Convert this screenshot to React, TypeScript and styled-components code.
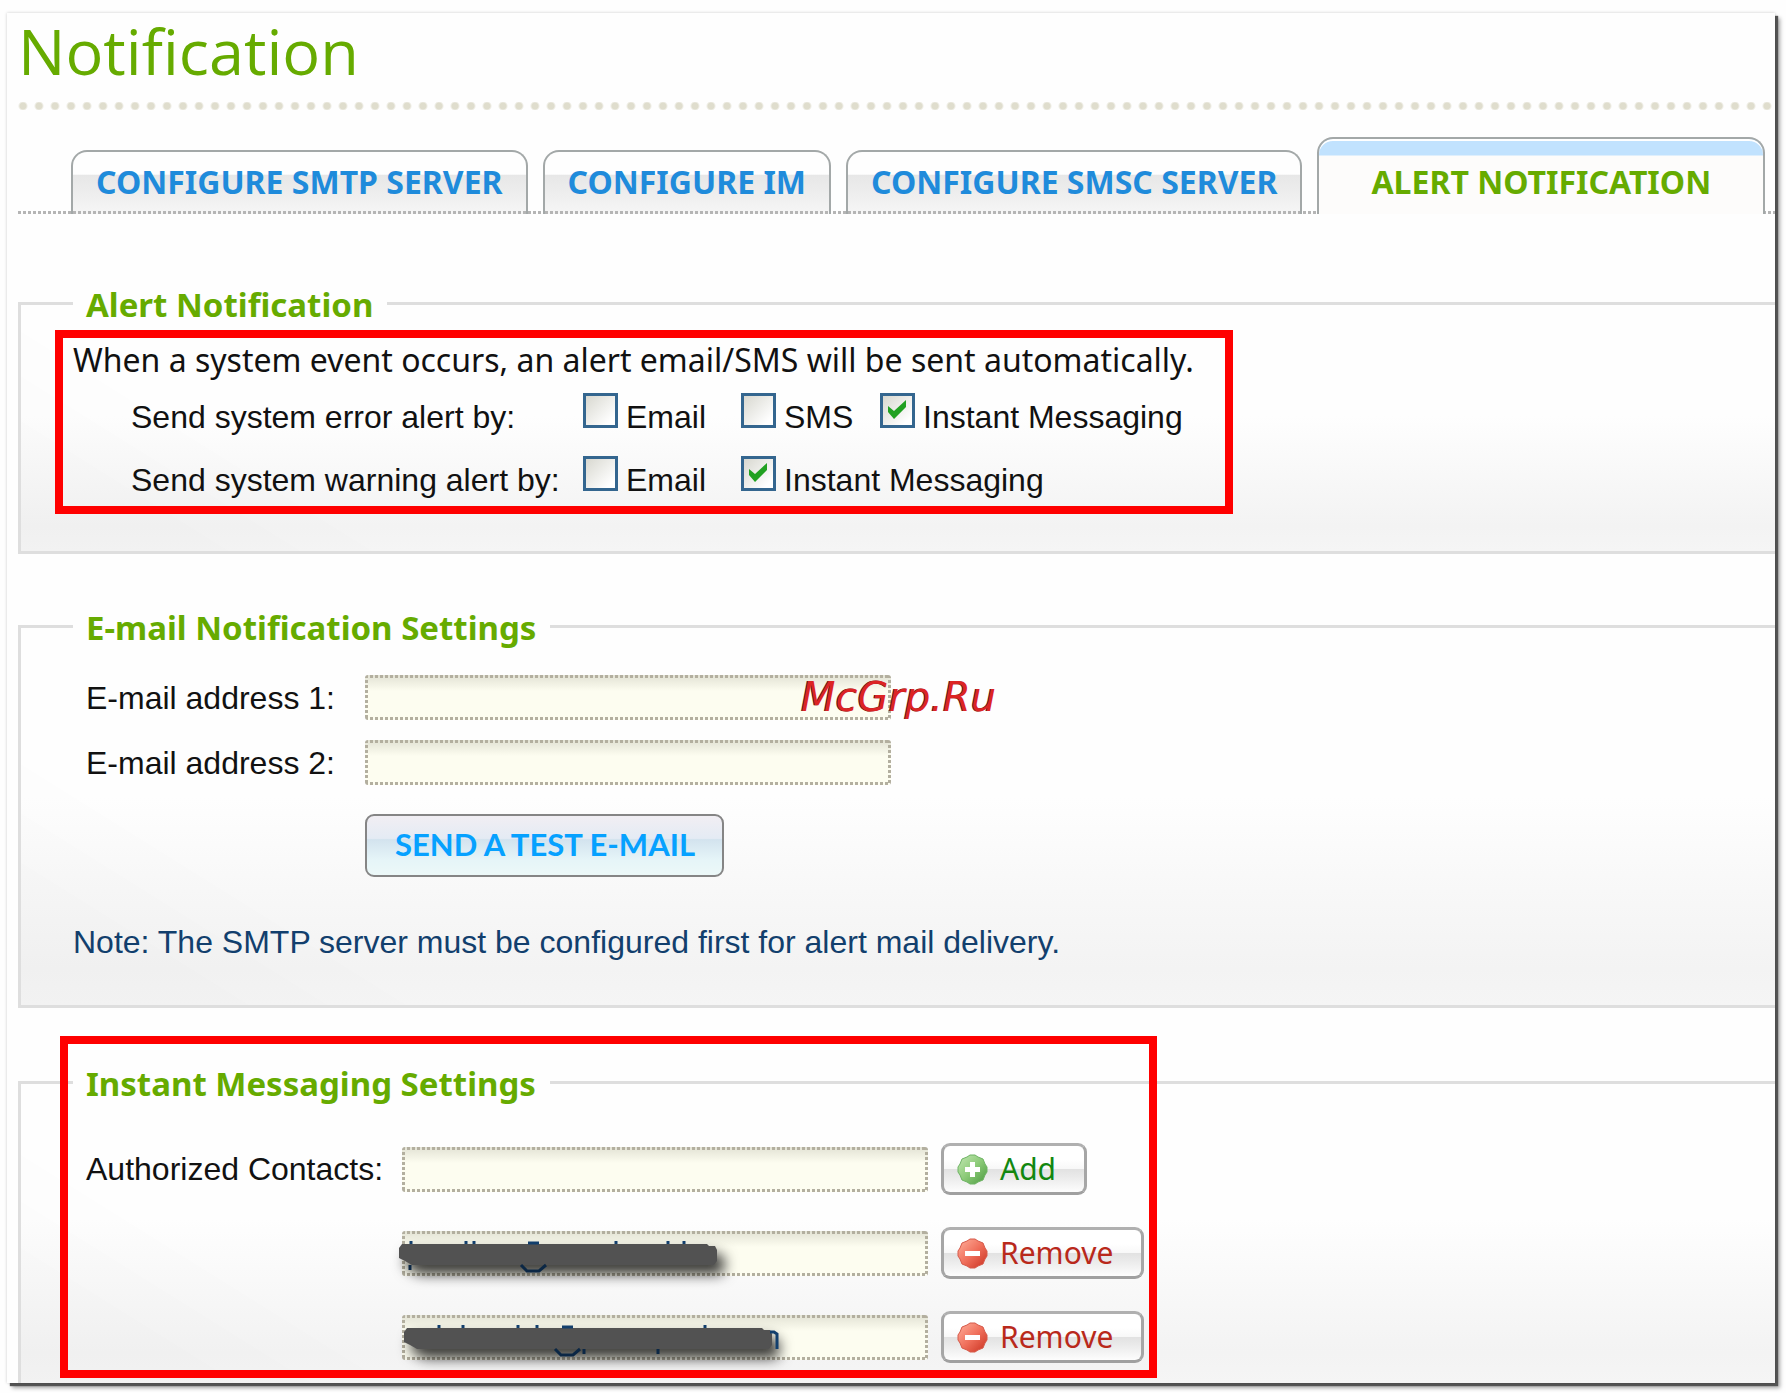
import React from "react";
import styled, { createGlobalStyle, css } from "styled-components";

const GlobalStyle = createGlobalStyle`
  *, *::before, *::after { box-sizing: border-box; }
  body { margin: 0; background: #fefefe; }
`;

const sans = `"Liberation Sans", Arial, sans-serif`;
const humanist = `"Noto Sans", "Open Sans", sans-serif`;
const green = "#66ab00";

const Page = styled.main`
  padding: 13px 11px 9px 7px;
  font: 32px/36px ${sans};
  color: #111;
`;

const Frame = styled.div`
  padding: 0 0 0 11px;
  background: #fefefe;
  box-shadow: 0 0 3px rgba(0, 0, 0, 0.2), 3px 3px 1px #555, 5px 5px 4px rgba(0, 0, 0, 0.35);
`;

const Title = styled.h1`
  margin: 0;
  font: 400 63px/76px "Open Sans", ${humanist};
  color: ${green};
`;

const DotRule = styled.div`
  height: 8px;
  margin-top: 13px;
  background: radial-gradient(circle at 5px 4px, #dfddcd 3px, transparent 5px) 0 0 / 16px 8px repeat-x;
`;

const TabStrip = styled.nav`
  display: flex;
  align-items: flex-end;
  gap: 15px;
  height: 77px;
  margin-top: 27px;
  padding-left: 53px;
  background: repeating-linear-gradient(90deg, #b5b5b5 0 3px, transparent 3px 5px) left bottom / 100% 3px no-repeat;
`;

const Tab = styled.a<{ $active?: boolean }>`
  flex: none;
  padding: 0 23px;
  border: 2px solid #a3a8a8;
  border-bottom: 0;
  border-radius: 16px 16px 0 0;
  height: 64px;
  font: 700 32px/60px ${humanist};
  color: #1f8bdb;
  text-decoration: none;
  white-space: nowrap;
  background: repeating-linear-gradient(90deg, #b5b5b5 0 3px, transparent 3px 5px) left bottom / 100% 3px no-repeat,
    linear-gradient(#fefefe 36%, #e7e7e7 37%, #ececec 60%, #f6f6f6);
  ${(p) =>
    p.$active &&
    css`
      height: 77px;
      padding: 13px 52px 0;
      color: ${green};
      background: linear-gradient(#c1e2fe 16px, #fdfcfb 17px);
      box-shadow: inset 0 2px 0 #fff;
    `}
`;

const Group = styled.fieldset<{ $top: number; $open?: boolean }>`
  position: relative;
  min-width: 0;
  margin: ${(p) => p.$top}px 0 0;
  padding: 0;
  border: 3px solid #dedede;
  border-right: 0;
  ${(p) => p.$open && "border-bottom: 0;"}
  background: linear-gradient(32deg, rgba(0, 0, 0, 0.012) 8%, transparent 18%),
    linear-gradient(#fefefe 45%, #f3f3f3 90%, #f5f5f5);
`;

const Legend = styled.legend`
  margin-left: 52px;
  padding: 4px 14px 0 13px;
  font: 700 33px/36px ${humanist};
  color: ${green};
`;

const AlertBox = styled.div`
  width: 1178px;
  max-width: 96%;
  height: 184px;
  margin: 7px 0 37px 34px;
  padding: 2px 0 0 10px;
  border: 8px solid #f00;
`;

const Lead = styled.p`
  margin: 0 0 13px;
  font: 32px/40px ${humanist};
  white-space: nowrap;
`;

const OptionRow = styled.div`
  display: grid;
  grid-template-columns: 452px 158px 139px auto;
  align-items: baseline;
  margin: 0 0 21px 58px;
  white-space: nowrap;
`;

const Option = styled.label<{ $wide?: boolean }>`
  display: flex;
  align-items: baseline;
  gap: 8px;
  ${(p) => p.$wide && "grid-column: span 2;"}
`;

const BoxWrap = styled.span`
  display: inline-grid;
  & > * {
    grid-area: 1 / 1;
  }
  svg {
    place-self: center;
    pointer-events: none;
    visibility: hidden;
  }
  input:checked + svg {
    visibility: visible;
  }
`;

const Box = styled.input`
  appearance: none;
  width: 35px;
  height: 35px;
  margin: 0;
  border: 3px solid #34668f;
  background: linear-gradient(135deg, #d8d8d0, #fff 85%);
`;

function Check({ label, on, wide }: { label: string; on?: boolean; wide?: boolean }) {
  return (
    <Option $wide={wide}>
      <BoxWrap>
        <Box type="checkbox" defaultChecked={on} />
        <svg width="21" height="24" viewBox="0 0 21 24">
          <path d="M1 7 L7 12 L19 1 V8 L7 20 L1 13 Z" fill="#21a121" />
        </svg>
      </BoxWrap>
      {label}
    </Option>
  );
}

const FieldRow = styled.div<{ $gap: number }>`
  display: flex;
  align-items: center;
  margin-top: ${(p) => p.$gap}px;
  padding-left: 65px;
`;

const FieldLabel = styled.label<{ $w: number }>`
  flex: none;
  width: ${(p) => p.$w}px;
  white-space: nowrap;
`;

const FieldSpace = styled.span<{ $w: number }>`
  flex: none;
  width: ${(p) => p.$w}px;
`;

const dotsX = "repeating-linear-gradient(90deg, #b3af9f 0 3px, transparent 3px 5px)";
const dotsY = "repeating-linear-gradient(180deg, #b3af9f 0 3px, transparent 3px 5px)";

const TextField = styled.input`
  width: 526px;
  height: 45px;
  padding: 0 8px;
  border: 0;
  border-radius: 3px;
  font: 32px/36px ${sans};
  color: #123f6d;
  background: ${dotsX} left top / 100% 3px no-repeat, ${dotsX} left bottom / 100% 3px no-repeat,
    ${dotsY} left top / 3px 100% no-repeat, ${dotsY} right top / 3px 100% no-repeat,
    linear-gradient(#e2e2d4, #fdfdf0 16px);
`;

const FieldHolder = styled.div`
  position: relative;
  display: flex;
  margin-right: 13px;
`;

const Scribble = styled.svg`
  position: absolute;
  left: -3px;
  top: 0;
  overflow: visible;
  pointer-events: none;
`;

const Watermark = styled.span`
  position: absolute;
  left: 436px;
  top: 0;
  font: italic 40px/45px "DejaVu Sans", sans-serif;
  color: #dc2424;
  text-shadow: -1px 0 0 #5b1c1c;
  pointer-events: none;
`;

const TestButton = styled.button`
  height: 63px;
  margin: 29px 0 0 344px;
  padding: 0 27px 4px 28px;
  border: 2px solid #858585;
  border-radius: 9px;
  font: 700 31px/36px Lato, sans-serif;
  color: #06a1ff;
  background: linear-gradient(#f1eef3, #e4ebf4 38%, #d3e3ee 40%, #e6f5f8 75%, #ecf8f8);
`;

const Note = styled.p`
  margin: 47px 0 45px;
  padding-left: 52px;
  color: #123f6d;
`;

const ActionButton = styled.button<{ $tone: string }>`
  display: flex;
  align-items: center;
  gap: 12px;
  height: 52px;
  padding: 0 28px 0 13px;
  border: 3px solid;
  border-color: #b0b0b0 #a6a6a6 #a0a0a0 #a6a6a6;
  border-radius: 9px;
  font: 30px/40px ${humanist};
  color: ${(p) => p.$tone};
  background: linear-gradient(#fff 30%, #f8f8f8 49%, #e2e2e2 51%, #e9e9e9 65%, #fdfdfd);
`;

const ContactList = styled.div`
  padding: 2px 0 20px;
`;

const Highlight = styled.div`
  position: absolute;
  left: 39px;
  top: -66px;
  width: 1097px;
  height: 342px;
  border: 8px solid #f00;
  pointer-events: none;
`;

function ActionIcon({ kind }: { kind: "add" | "remove" }) {
  const add = kind === "add";
  const id = `ball-${kind}`;
  return (
    <svg width="31" height="31" viewBox="0 0 31 31" aria-hidden="true">
      <defs>
        <linearGradient id={id} x1="0" y1="0" x2="1" y2="1">
          <stop offset="0" stopColor={add ? "#c4e8b4" : "#ffb09c"} />
          <stop offset="0.5" stopColor={add ? "#8cca78" : "#f0705c"} />
          <stop offset="1" stopColor={add ? "#4b9a3f" : "#c9301f"} />
        </linearGradient>
      </defs>
      <path
        d="M13 1 H18 L21 3 L26 5 L28 10 L30 13 V18 L28 21 L26 26 L21 28 L18 30 H13 L10 28 L5 26 L3 21 L1 18 V13 L3 10 L5 5 L10 3 Z"
        fill={`url(#${id})`}
        stroke={add ? "#6fb465" : "#d65a4a"}
        strokeWidth="1"
      />
      {add ? <path d="M13 8h5v5h5v5h-5v5h-5v-5H8v-5h5Z" fill="#fff" /> : <path d="M8 13h15v5H8Z" fill="#fff" />}
    </svg>
  );
}

type RedactionProps = { start: number; end: number; ticks: number[]; low: number[]; at: number; tail?: boolean };

function Redaction({ start, end, ticks, low, at, tail }: RedactionProps) {
  return (
    <Scribble width="400" height="45" viewBox="0 0 400 45" aria-hidden="true">
      <path
        style={{ filter: "drop-shadow(7px 9px 7px rgba(0,0,0,0.8))" }}
        d={`M${start + 3} 13 H${end - 10} L${end - 8} 15 H${end - 2} L${end} 19 V30 L${end - 3} 34 H${start + 13} L${start + 6} 30 L${start} 27 V17 Z`}
        fill="#525252"
      />
      <g stroke="#123f6d" strokeWidth="3" fill="none">
        {ticks.map((x) => (
          <path key={x} d={`M${x} 10 v3`} />
        ))}
        {low.map((x) => (
          <path key={x} d={`M${x} 34 v5`} stroke="#0b2745" />
        ))}
        <path d={`M${at - 5} 12 h11`} />
        <path d={`M${at - 12} 34 l6 6 h12 l7 -6`} stroke="#0b2745" />
        {tail && <path d={`M${end - 2} 17 h4 l3 2 v15`} />}
      </g>
    </Scribble>
  );
}

export default function App() {
  return (
    <Page>
      <GlobalStyle />
      <Frame>
        <Title>Notification</Title>
        <DotRule />
        <TabStrip>
          <Tab href="#smtp">CONFIGURE SMTP SERVER</Tab>
          <Tab href="#im">CONFIGURE IM</Tab>
          <Tab href="#smsc">CONFIGURE SMSC SERVER</Tab>
          <Tab href="#alert" $active>
            ALERT NOTIFICATION
          </Tab>
        </TabStrip>

        <Group $top={69}>
          <Legend>Alert Notification</Legend>
          <AlertBox>
            <Lead>When a system event occurs, an alert email/SMS will be sent automatically.</Lead>
            <OptionRow>
              <span>Send system error alert by:</span>
              <Check label="Email" />
              <Check label="SMS" />
              <Check label="Instant Messaging" on />
            </OptionRow>
            <OptionRow>
              <span>Send system warning alert by:</span>
              <Check label="Email" />
              <Check label="Instant Messaging" on wide />
            </OptionRow>
          </AlertBox>
        </Group>

        <Group $top={52}>
          <Legend>E-mail Notification Settings</Legend>
          <FieldRow $gap={29}>
            <FieldLabel $w={279} htmlFor="mail1">E-mail address 1:</FieldLabel>
            <FieldHolder>
              <TextField id="mail1" type="email" />
              <Watermark>McGrp.Ru</Watermark>
            </FieldHolder>
          </FieldRow>
          <FieldRow $gap={20}>
            <FieldLabel $w={279} htmlFor="mail2">E-mail address 2:</FieldLabel>
            <FieldHolder>
              <TextField id="mail2" type="email" />
            </FieldHolder>
          </FieldRow>
          <TestButton type="button">SEND A TEST E-MAIL</TestButton>
          <Note>Note: The SMTP server must be configured first for alert mail delivery.</Note>
        </Group>

        <Group $top={54} $open>
          <Legend>Instant Messaging Settings</Legend>
          <ContactList>
            <FieldRow $gap={39}>
              <FieldLabel $w={316} htmlFor="contact">Authorized Contacts:</FieldLabel>
              <FieldHolder>
                <TextField id="contact" />
              </FieldHolder>
              <ActionButton type="button" $tone="#12870f">
                <ActionIcon kind="add" />
                Add
              </ActionButton>
            </FieldRow>
            <FieldRow $gap={32}>
              <FieldSpace $w={316} />
              <FieldHolder>
                <TextField aria-label="Contact 1" />
                <Redaction start={0} end={318} ticks={[12, 67, 75, 217, 269, 285]} low={[11]} at={134} />
              </FieldHolder>
              <ActionButton type="button" $tone="#b9291b">
                <ActionIcon kind="remove" />
                Remove
              </ActionButton>
            </FieldRow>
            <FieldRow $gap={32}>
              <FieldSpace $w={316} />
              <FieldHolder>
                <TextField aria-label="Contact 2" />
                <Redaction start={5} end={373} ticks={[40, 64, 119, 138, 306]} low={[185, 259]} at={168} tail />
              </FieldHolder>
              <ActionButton type="button" $tone="#b9291b">
                <ActionIcon kind="remove" />
                Remove
              </ActionButton>
            </FieldRow>
          </ContactList>
          <Highlight />
        </Group>
      </Frame>
    </Page>
  );
}
